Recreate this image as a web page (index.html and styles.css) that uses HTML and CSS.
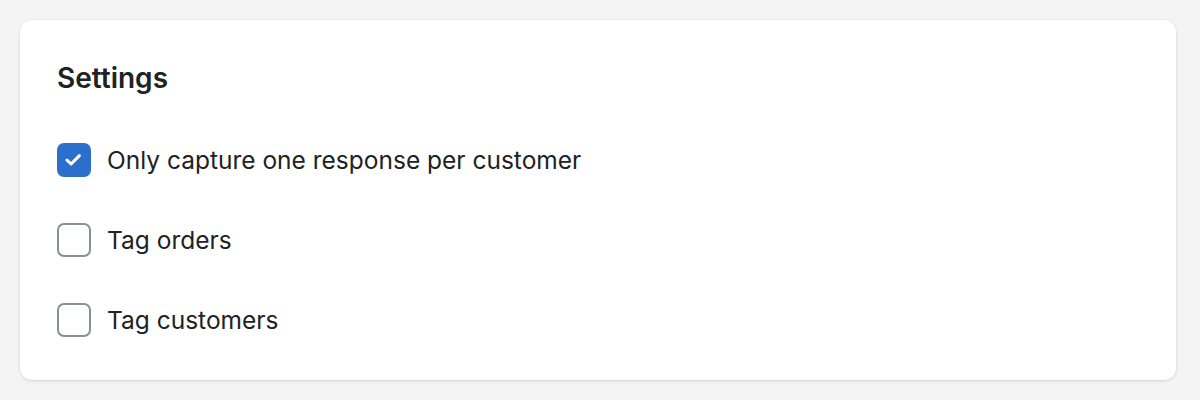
FILE: index.html
```html
<!DOCTYPE html>
<html>
<head>
<meta charset="utf-8">
<link rel="stylesheet" href="styles.css">
</head>
<body>
<div class="card">
  <h2 class="title">Settings</h2>
  <div class="options">
    <label class="option">
      <span class="box checked">
        <svg viewBox="0 0 34 34" width="34" height="34"><path d="M10 17.1L14.1 21L22.4 12.6" fill="none" stroke="#fff" stroke-width="3" stroke-linecap="round" stroke-linejoin="round"/></svg>
      </span>
      <span class="label">Only capture one response per customer</span>
    </label>
    <label class="option">
      <span class="box"></span>
      <span class="label">Tag orders</span>
    </label>
    <label class="option">
      <span class="box"></span>
      <span class="label">Tag customers</span>
    </label>
  </div>
</div>
</body>
</html>
```
FILE: styles.css
```css
html, body {
  margin: 0;
  padding: 0;
  background: #f4f4f4;
}
body {
  padding: 20px 24px 20px 20px;
  font-family: Inter, "Noto Sans", sans-serif;
  color: #202223;
}
.card {
  background: #fff;
  border-radius: 12px;
  box-shadow: 0 1px 3px rgba(0,0,0,0.12), 0 0 0 1px rgba(0,0,0,0.02);
  padding: 44px 36px 28px 37px;
  height: 360px;
  box-sizing: border-box;
}
.title {
  margin: 0;
  font-size: 28px;
  font-weight: 600;
  line-height: 28px;
}
.options {
  display: flex;
  flex-direction: column;
  gap: 46px;
  margin-top: 51px;
}
.option {
  display: flex;
  align-items: center;
  gap: 16px;
  height: 34px;
}
.box {
  width: 34px;
  height: 34px;
  flex: none;
  box-sizing: border-box;
  border: 2.6px solid #8a8f94;
  border-radius: 7px;
  display: flex;
  align-items: center;
  justify-content: center;
}
.box.checked {
  background: #2c6ecb;
  border-color: #2c6ecb;
}
.box svg {
  flex: none;
}
.label {
  font-size: 24.5px;
  line-height: 34px;
}
```
